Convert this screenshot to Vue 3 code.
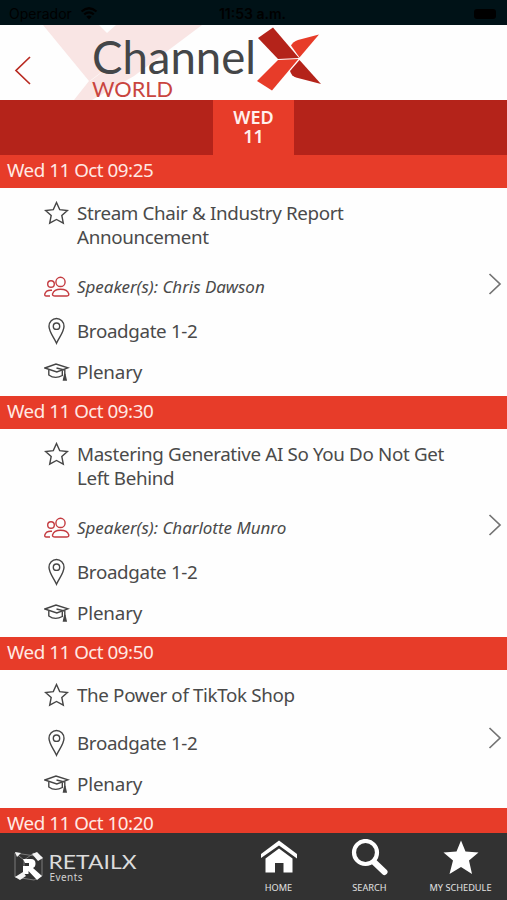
<template>
  <div class="app">
    <div class="status-bar">
      <div class="carrier">
        <span>Operador</span>
        <svg width="18" height="13" viewBox="0 0 18 13">
          <path d="M1.5 4.5Q9-2 16.5 4.5M4.2 7.4Q9 3.3 13.8 7.4" fill="none" stroke="#000" stroke-width="2.2" />
          <path d="M6.3 9.4Q9 7.4 11.7 9.4L9 12.4Z" />
        </svg>
      </div>
      <span class="clock">11:53 a.m.</span>
      <span class="battery"></span>
    </div>

    <header class="header">
      <svg width="507" height="75" viewBox="0 25 507 75">
        <g fill="#f9e5e4">
          <path d="M43 25H99L107 33L116 25H202L134 76L92 100H74L89 81Z" />
        </g>
        <path d="M90 81L106 69" stroke="#fdf4f3" stroke-width="1" />
        <path d="M30 57L16 70.500L30 84" fill="none" stroke="#b92b22" stroke-width="1.700" />
        <text class="brand" x="92" y="73.500" textLength="164" lengthAdjust="spacingAndGlyphs">Channel</text>
        <text class="world" x="92" y="96.500" textLength="81" lengthAdjust="spacingAndGlyphs">WORLD</text>
        <path d="M258 38L273 27.500L299 58L278 59Z" fill="#b4231a" />
        <path d="M278 60L298.500 59L272 90.500L257 81Z" fill="#e73c29" />
        <path d="M291 45.500Q293 41.500 298 40L319 34.500L299.500 57.500Z" fill="#e73c29" />
        <path d="M299.500 60L321 84L296 77.500Q291.500 76 290 71Z" fill="#b4231a" />
      </svg>
    </header>

    <nav class="days">
      <div class="day"><span>WED</span><span>11</span></div>
    </nav>

    <main class="agenda">
      <section v-for="s in sessions" :key="s.time">
        <h2 class="slot">{{ s.time }}</h2>
        <div v-if="s.title" class="session">
          <div class="info">
            <div class="row title-row">
              <svg class="icon" width="26" height="25" viewBox="0 0 26 25">
                <path d="M12.500 1.500L15.700 8.600L23.400 9.500L17.800 14.500L19.300 22.200L12.500 18.500L5.700 22.200L7.200 14.500L1.600 9.500L9.300 8.600Z" />
              </svg>
              <div class="title">
                <span v-for="line in s.title" :key="line">{{ line }}</span>
              </div>
            </div>
            <div v-if="s.speaker" class="row speaker">
              <svg class="icon red" width="26" height="22" viewBox="0 0 26 22">
                <circle cx="16.500" cy="5.900" r="4.600" />
                <circle cx="7" cy="8" r="3.300" />
                <path d="M11 20Q8.300 20 8.500 18Q10 13.300 16.500 13.300Q23.500 13.300 24.800 18Q25 20 22.500 20Z" />
                <path d="M6 20H2.200Q.5 20 .8 18Q2 14.200 6.500 14.200H8" />
              </svg>
              <em>Speaker(s): {{ s.speaker }}</em>
            </div>
            <div class="row">
              <svg class="icon" width="26" height="28" viewBox="0 0 26 28">
                <path d="M12.500 26.300C10 20.500 5 15 5 9.300A7.500 7.800 0 0 1 20 9.300C20 15 15 20.500 12.500 26.300Z" />
                <circle cx="12.500" cy="9.200" r="3.200" />
              </svg>
              <span>Broadgate 1-2</span>
            </div>
            <div class="row">
              <svg class="icon" width="26" height="20" viewBox="0 0 26 20">
                <path d="M.8 6L12 2L24 5.800L12.800 10Z" />
                <path d="M4.800 8V13Q11 17.500 18.300 13.500V8.500M12.500 6L20.800 8V13" />
                <path d="M20.800 12L19.500 18H22.200Z" fill="#454545" />
              </svg>
              <span class="plenary">Plenary</span>
            </div>
          </div>
          <svg class="chevron" :class="{ raised: s.speaker }" width="14" height="24" viewBox="0 0 14 24">
            <path d="M1.500 2L12 12L1.500 22" />
          </svg>
        </div>
      </section>
    </main>

    <footer class="tabs">
      <svg class="retailx" width="130" height="40" viewBox="10 845 130 40">
        <path d="M15 853L42 857V876L34 880L15 877ZM15 853L24 860V875L15 877M24 860L34 853" fill="none" stroke="#7a7a7a" stroke-width="1" />
        <path d="M23 859H31Q35.500 859 35.500 863.500Q35.500 867 33 868L42 876L37 880L28.500 871V874H23V866H29V863H25Z" fill="#fff" />
        <path d="M32 854L37 852L43 858L38 861ZM15 852L21 853L17 857ZM15 877L23 872L26 876L20 880Z" fill="#f4f4f4" />
        <text class="rx" x="48.500" y="868.500" textLength="88" lengthAdjust="spacingAndGlyphs">RETAILX</text>
        <text class="events" x="49.500" y="880.500" textLength="33" lengthAdjust="spacing">Events</text>
      </svg>
      <div class="tab home">
        <svg width="40" height="40" viewBox="0 0 40 40">
          <path d="M2 19V15L20 1.500L38 15V19.500L20 6.500Z" />
          <path d="M6.500 19.500L20 9.500L33.500 19.500V33.500H24.500V24H16V33.500H6.500Z" />
        </svg>
        <span>HOME</span>
      </div>
      <div class="tab search">
        <svg width="40" height="40" viewBox="0 0 40 40">
          <circle cx="15.500" cy="13.500" r="11.500" fill="none" stroke="#fff" stroke-width="4.200" />
          <path d="M24 23L34.500 33" stroke="#fff" stroke-width="6" stroke-linecap="round" />
        </svg>
        <span>SEARCH</span>
      </div>
      <div class="tab schedule">
        <svg width="40" height="40" viewBox="0 0 40 40">
          <path d="M20 1.500L24.500 12.500L37.500 13.500L28 21.500L31 35L20 28L8.500 35L12 21.500L2.500 13.500L15.500 12.500Z" />
        </svg>
        <span>MY SCHEDULE</span>
      </div>
    </footer>
  </div>
</template>

<script setup>
const sessions = [
  {
    time: 'Wed 11 Oct 09:25',
    title: ['Stream Chair & Industry Report', 'Announcement'],
    speaker: 'Chris Dawson'
  },
  {
    time: 'Wed 11 Oct 09:30',
    title: ['Mastering Generative AI So You Do Not Get', 'Left Behind'],
    speaker: 'Charlotte Munro'
  },
  { time: 'Wed 11 Oct 09:50', title: ['The Power of TikTok Shop'] },
  { time: 'Wed 11 Oct 10:20' }
]
</script>

<style>
body {
  margin: 0;
  background: #fefefe;
}
</style>

<style scoped>
.app {
  display: flex;
  flex-direction: column;
  width: 507px;
  height: 900px;
  overflow: hidden;
  background: #fefefe;
  font-family: 'Noto Sans', sans-serif;
  color: #4a4a4a;
}

.status-bar {
  display: grid;
  grid-template-columns: 1fr auto 1fr;
  align-items: center;
  flex: none;
  height: 25px;
  padding: 2px 11px 0 9px;
  box-sizing: border-box;
  background: #001217;
  color: #000;
  font: 14px 'Inter', sans-serif;
}

.carrier {
  display: flex;
  align-items: center;
  gap: 8px;
}

.clock {
  font-weight: 600;
}

.battery {
  justify-self: end;
  width: 22px;
  height: 10px;
  border-radius: 3px;
  background: #000;
}

.header {
  flex: none;
  height: 75px;
}

.header svg {
  display: block;
}

.brand {
  font: 46px 'Lato', sans-serif;
  fill: #444648;
}

.world {
  font: 21.5px 'Lato', sans-serif;
  fill: #c9453f;
}

.days {
  display: flex;
  justify-content: center;
  flex: none;
  height: 55px;
  background: #b4231a;
}

.day {
  display: flex;
  flex-direction: column;
  align-items: center;
  width: 81px;
  padding-top: 8px;
  box-sizing: border-box;
  background: #e73c29;
  color: #fff0ed;
  font-size: 18px;
  font-weight: 600;
  line-height: 19px;
}

.agenda {
  flex: 1;
  min-height: 0;
  overflow: hidden;
}

.slot {
  height: 33px;
  margin: 0;
  padding-left: 7px;
  background: #e73c29;
  color: #ffe9e4;
  font-size: 18.8px;
  font-weight: 400;
  line-height: 31px;
  letter-spacing: -0.48px;
}

.session {
  display: flex;
  align-items: center;
  justify-content: space-between;
  padding: 13px 5px 3px 44px;
}

.row {
  display: flex;
  align-items: center;
  gap: 7px;
  height: 41.5px;
  font-size: 18.8px;
  letter-spacing: -0.35px;
  white-space: nowrap;
}

.title-row {
  align-items: flex-start;
  height: auto;
  margin-bottom: 14px;
}

.title {
  display: flex;
  flex-direction: column;
  line-height: 24.5px;
  margin: -0.5px 0 0.5px;
}

.speaker {
  height: 46px;
  font-size: 17px;
  letter-spacing: -0.04px;
}

.speaker em {
  padding-bottom: 2px;
}

.plenary {
  letter-spacing: -0.15px;
}

.icon {
  flex: none;
  fill: none;
  stroke: #454545;
  stroke-width: 1.4;
}

.red {
  stroke: #c43b40;
}

.chevron {
  flex: none;
  margin-bottom: 13px;
  fill: none;
  stroke: #737373;
  stroke-width: 1.7;
}

.raised {
  margin-bottom: 27px;
}

.tabs {
  display: flex;
  flex: none;
  height: 67px;
  background: #323232;
}

.retailx {
  flex: none;
  margin: 12px 93px 0 10px;
}

.rx {
  font: 20px 'Lato', sans-serif;
  fill: #dcdcdc;
}

.events {
  font: 10px 'Noto Sans', sans-serif;
  fill: #d0d0d0;
}

.tab {
  display: flex;
  flex-direction: column;
  align-items: center;
  flex: none;
  width: 91px;
  padding-top: 6px;
  box-sizing: border-box;
  color: #e2e2e2;
  font-size: 9.2px;
  line-height: 17px;
  white-space: nowrap;
}

.tab svg {
  fill: #fff;
}
</style>
